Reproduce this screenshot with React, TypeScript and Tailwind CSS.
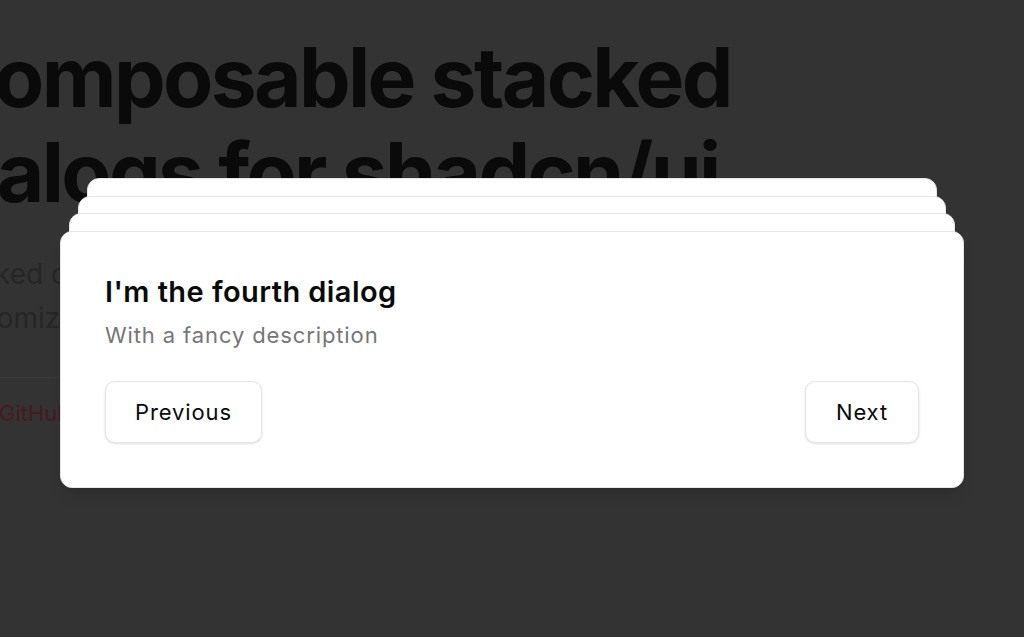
import React from "react";

function BackLayer({ className }: { className: string }) {
  return (
    <div
      className={`absolute h-[257px] rounded-[12px] border border-[#e5e5e5] bg-white ${className}`}
    />
  );
}

export default function App() {
  return (
    <div
      className="relative h-[637px] w-[1024px] overflow-hidden bg-[#333333]"
      style={{ fontFamily: "Inter, 'Liberation Sans', sans-serif" }}
    >
      {/* page behind the overlay */}
      <div className="ml-[-64px] pt-[30px]">
        <h1 className="text-[82px] font-bold leading-[95px] tracking-[-0.032em] text-[#0a0a0a]">
          Composable stacked
          <br />
          <span className="ml-[-8px]">dialogs for shadcn/ui</span>
        </h1>
        <p className="mt-[32px] text-[28px] leading-[44px] text-[#262626]">
          Stacked composable dialogs, built on Radix primitives.
          <br />
          Customizable, accessible and open source.
        </p>
        <div className="mt-[37px] w-[600px] border-t border-[#3a3a3a]" />
        <div className="mt-[20px] pl-[63px] text-[22px] leading-[30px] text-[#471920]">
          GitHub
        </div>
      </div>

      {/* stacked dialogs */}
      <BackLayer className="left-[87px] top-[178px] w-[850px]" />
      <BackLayer className="left-[78px] top-[196px] w-[868px]" />
      <BackLayer className="left-[69px] top-[213px] w-[886px]" />

      <div className="absolute left-[60px] top-[231px] flex h-[257px] w-[904px] flex-col rounded-[12px] border border-[#e5e5e5] bg-white p-[44px] shadow-lg">
        <h2 className="text-[29px] font-semibold leading-[32px] tracking-[0.015em] text-[#0a0a0a]">
          I'm the fourth dialog
        </h2>
        <p className="mt-[12px] text-[22px] leading-[30px] tracking-[0.04em] text-[#767676]">
          With a fancy description
        </p>
        <div className="mt-auto flex items-center justify-between">
          <button className="h-[62px] rounded-[10px] border border-[#e5e5e5] bg-white px-[29px] text-[22px] tracking-[0.04em] text-[#0a0a0a] shadow-sm">
            Previous
          </button>
          <button className="h-[62px] rounded-[10px] border border-[#e5e5e5] bg-white px-[30px] text-[22px] tracking-[0.04em] text-[#0a0a0a] shadow-sm">
            Next
          </button>
        </div>
      </div>
    </div>
  );
}
